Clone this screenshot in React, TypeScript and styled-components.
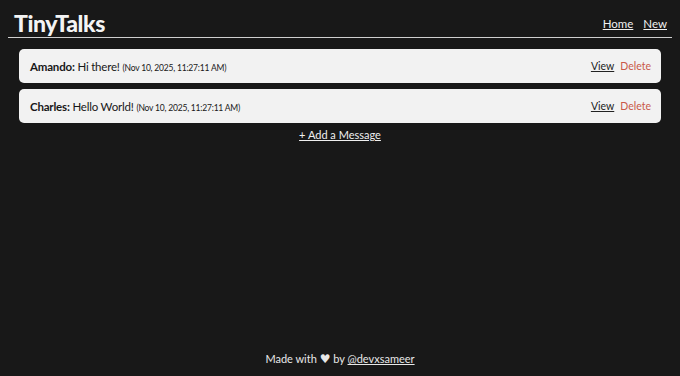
import styled, { createGlobalStyle } from 'styled-components';

type Message = {
  id: number;
  user: string;
  text: string;
  added: string;
};

const messages: Message[] = [
  { id: 1, user: 'Amando', text: 'Hi there!', added: 'Nov 10, 2025, 11:27:11 AM' },
  { id: 2, user: 'Charles', text: 'Hello World!', added: 'Nov 10, 2025, 11:27:11 AM' },
];

const GlobalStyle = createGlobalStyle`
  html, body {
    background: #181818;
  }
  body {
    margin: 8px;
    font-family: 'Lato', 'Noto Sans', sans-serif;
    color: #f2f2f2;
  }
  * {
    box-sizing: border-box;
  }
`;

function MessageItem({ message }: { message: Message }) {
  return (
    <Card>
      <Content>
        <Author>{message.user}:</Author> {message.text} <Stamp>({message.added})</Stamp>
      </Content>
      <Actions>
        <ViewLink href="#">View</ViewLink>
        <DeleteLink href="#">Delete</DeleteLink>
      </Actions>
    </Card>
  );
}

function App() {
  return (
    <>
      <GlobalStyle />
      <Page>
        <Header>
          <Title>TinyTalks</Title>
          <Nav>
            <NavLink href="#">Home</NavLink>
            <NavLink href="#">New</NavLink>
          </Nav>
        </Header>
        <Main>
          <List>
            {messages.map((m) => (
              <MessageItem key={m.id} message={m} />
            ))}
          </List>
          <AddLink href="#">+ Add a Message</AddLink>
        </Main>
        <Footer>
          Made with <Heart>♥</Heart> by <FooterLink href="#">@devxsameer</FooterLink>
        </Footer>
      </Page>
    </>
  );
}

export default App;

const Page = styled.div`
  display: flex;
  flex-direction: column;
  min-height: calc(100vh - 16px);
`;

const Header = styled.header`
  display: flex;
  justify-content: space-between;
  align-items: center;
  height: 30px;
  padding: 0 5px 0 6px;
  border-bottom: 1.5px solid #cfcfcf;
`;

const Title = styled.h1`
  margin: 0;
  font-size: 23px;
  font-weight: 900;
  letter-spacing: -0.4px;
  color: #f4f4f4;
`;

const Nav = styled.nav`
  display: flex;
  gap: 10px;
  padding-top: 2px;
`;

const NavLink = styled.a`
  font-size: 11.5px;
  color: #f0f0f0;
  text-decoration: underline;
`;

const Main = styled.main`
  flex: 1;
  display: flex;
  flex-direction: column;
  align-items: center;
  padding: 11px 11px 0;
`;

const List = styled.div`
  display: flex;
  flex-direction: column;
  gap: 6px;
  width: 100%;
`;

const Card = styled.div`
  display: flex;
  justify-content: space-between;
  align-items: center;
  height: 34px;
  padding: 0 10px 0 11px;
  background: #f2f2f2;
  border-radius: 5px;
  color: #181818;
`;

const Content = styled.div`
  font-size: 11.5px;
  letter-spacing: -0.2px;
`;

const Author = styled.strong`
  font-weight: 700;
`;

const Stamp = styled.span`
  font-size: 8.5px;
  letter-spacing: -0.2px;
`;

const Actions = styled.div`
  display: flex;
  gap: 6px;
  font-size: 10.5px;
`;

const ViewLink = styled.a`
  color: #222;
  text-decoration: underline;
`;

const DeleteLink = styled.a`
  color: #c9594a;
  text-decoration: none;
`;

const AddLink = styled.a`
  margin-top: 5px;
  font-size: 11px;
  color: #f0f0f0;
  text-decoration: underline;
`;

const Footer = styled.footer`
  padding-bottom: 2px;
  text-align: center;
  font-size: 11px;
  color: #e8e8e8;
`;

const Heart = styled.span`
  font-size: 12px;
  font-family: 'DejaVu Sans', sans-serif;
`;

const FooterLink = styled.a`
  color: #e8e8e8;
  text-decoration: underline;
`;
